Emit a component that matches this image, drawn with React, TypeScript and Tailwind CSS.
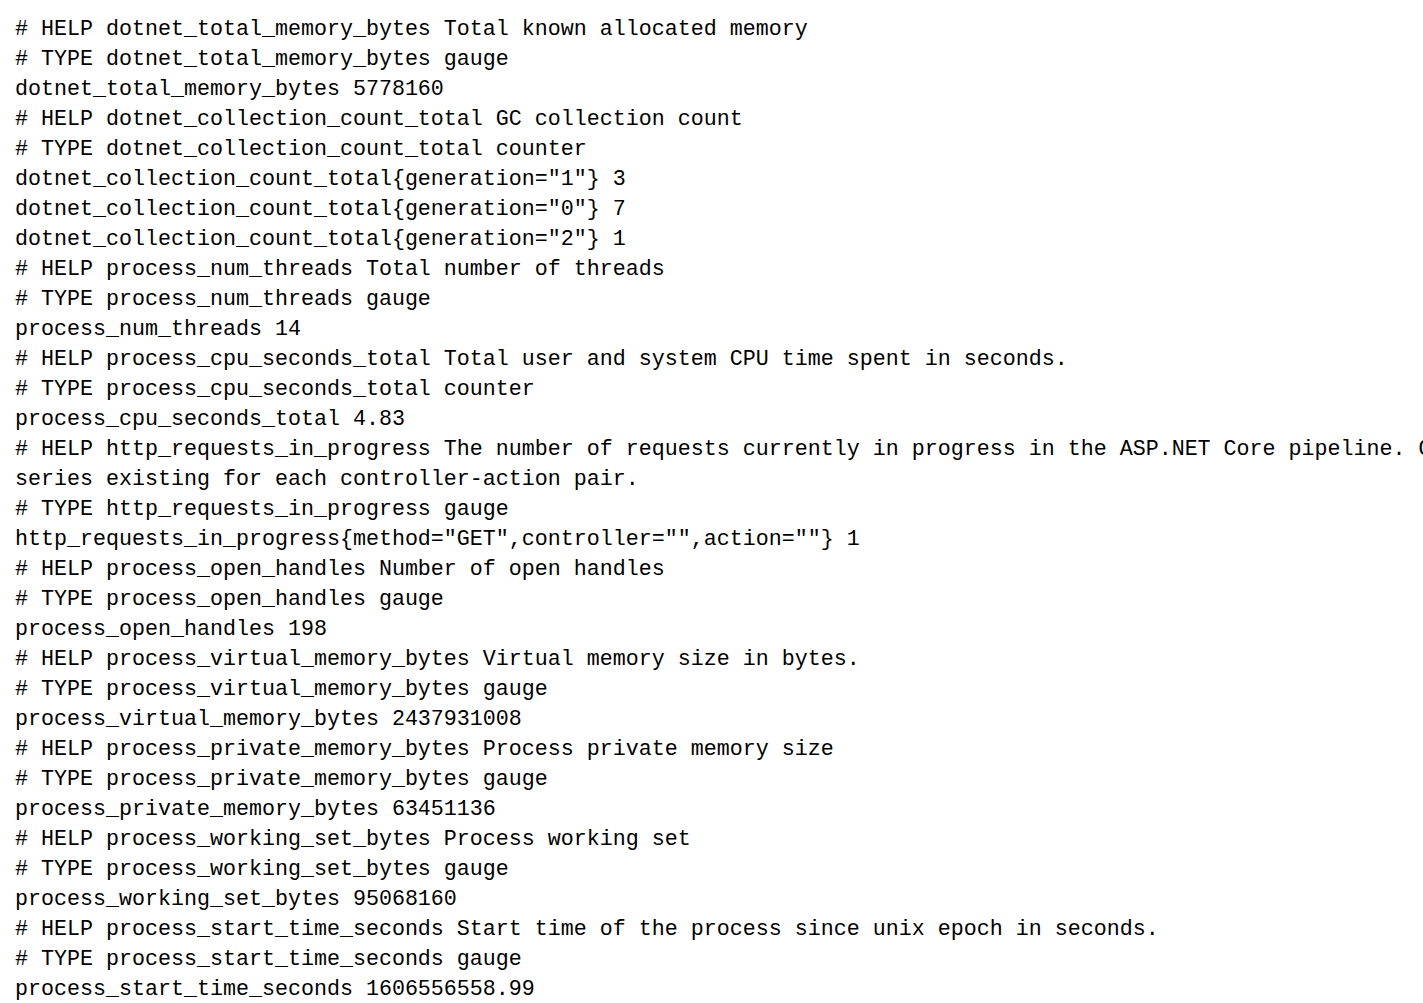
const lines = [
  "# HELP dotnet_total_memory_bytes Total known allocated memory",
  "# TYPE dotnet_total_memory_bytes gauge",
  "dotnet_total_memory_bytes 5778160",
  "# HELP dotnet_collection_count_total GC collection count",
  "# TYPE dotnet_collection_count_total counter",
  'dotnet_collection_count_total{generation="1"} 3',
  'dotnet_collection_count_total{generation="0"} 7',
  'dotnet_collection_count_total{generation="2"} 1',
  "# HELP process_num_threads Total number of threads",
  "# TYPE process_num_threads gauge",
  "process_num_threads 14",
  "# HELP process_cpu_seconds_total Total user and system CPU time spent in seconds.",
  "# TYPE process_cpu_seconds_total counter",
  "process_cpu_seconds_total 4.83",
  "# HELP http_requests_in_progress The number of requests currently in progress in the ASP.NET Core pipeline. One",
  "series existing for each controller-action pair.",
  "# TYPE http_requests_in_progress gauge",
  'http_requests_in_progress{method="GET",controller="",action=""} 1',
  "# HELP process_open_handles Number of open handles",
  "# TYPE process_open_handles gauge",
  "process_open_handles 198",
  "# HELP process_virtual_memory_bytes Virtual memory size in bytes.",
  "# TYPE process_virtual_memory_bytes gauge",
  "process_virtual_memory_bytes 2437931008",
  "# HELP process_private_memory_bytes Process private memory size",
  "# TYPE process_private_memory_bytes gauge",
  "process_private_memory_bytes 63451136",
  "# HELP process_working_set_bytes Process working set",
  "# TYPE process_working_set_bytes gauge",
  "process_working_set_bytes 95068160",
  "# HELP process_start_time_seconds Start time of the process since unix epoch in seconds.",
  "# TYPE process_start_time_seconds gauge",
  "process_start_time_seconds 1606556558.99",
];

const App = () => {
  return (
    <div className="h-[1003px] w-[1423px] overflow-hidden bg-white">
      <pre className="pl-[15px] pt-[15px] font-['Liberation_Mono',monospace] text-[21.67px] leading-[30px] text-black">
        {lines.map((l, i) => (
          <div key={i} className="whitespace-pre">
            {l}
          </div>
        ))}
      </pre>
    </div>
  );
};

export default App;
